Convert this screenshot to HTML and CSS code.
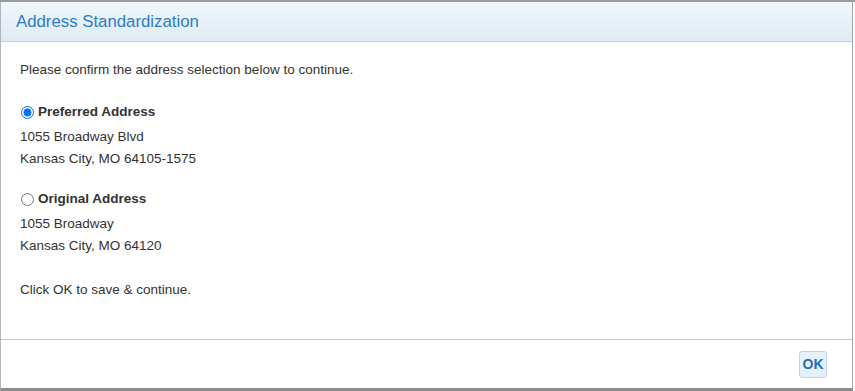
FILE: index.html
```html
<!DOCTYPE html>
<html lang="en">

<head>
    <meta charset="UTF-8">
    <meta name="viewport" content="width=device-width, initial-scale=1.0">
    <title>Address Standardization</title>
    <link rel="stylesheet" href="styles.css">
</head>

<body>

    <div class="topstrip"></div>
    <div class="modal">
        <div class="modal-header">
            <h1 class="modal-title">Address Standardization</h1>
        </div>
        <div class="modal-body">
            <p class="intro">Please confirm the address selection below to continue.</p>

            <div class="option">
                <label class="option-label">
                    <input type="radio" name="addr" value="preferred" checked>
                    <span>Preferred Address</span>
                </label>
                <div class="address">
                    <div>1055 Broadway Blvd</div>
                    <div>Kansas City, MO 64105-1575</div>
                </div>
            </div>

            <div class="option">
                <label class="option-label">
                    <input type="radio" name="addr" value="original">
                    <span>Original Address</span>
                </label>
                <div class="address">
                    <div>1055 Broadway</div>
                    <div>Kansas City, MO 64120</div>
                </div>
            </div>

            <p class="outro">Click OK to save &amp; continue.</p>
        </div>
        <div class="modal-footer">
            <button class="btn-ok">OK</button>
        </div>
    </div>

</body>

</html>
```

FILE: styles.css
```css
body {
    margin: 0;
    background: #fff;
    font-family: "Liberation Sans", Arial, sans-serif;
    font-size: 13.5px;
    color: #333;
}

.topstrip {
    height: 2px;
    background: #9c9c9c;
}

.modal {
    width: 851px;
    height: 386px;
    border-left: 1px solid #b4b4b4;
    border-right: 1px solid #a8a8a8;
    border-bottom: 3px solid #8c8c8c;
    display: flex;
    flex-direction: column;
    background: #fff;
}

.modal-header {
    height: 39px;
    border-bottom: 1px solid #b6d0e6;
    background: linear-gradient(#f1f7fc, #deebf6);
    display: flex;
    align-items: center;
    padding-left: 15px;
}

.modal-title {
    margin: 0;
    font-size: 16.8px;
    font-weight: normal;
    color: #2b7cc6;
}

.modal-body {
    flex: 1;
    padding: 17px 19px 0;
    line-height: 22px;
}

.intro {
    margin: 0 0 20px;
}

.option {
    margin-bottom: 18px;
}

.option-label {
    display: flex;
    align-items: center;
    font-weight: bold;
}

.option-label input {
    margin: 0 4px 0 1px;
    width: 13px;
    height: 13px;
}

.address {
    margin-top: 3px;
}

.outro {
    margin: 22px 0 0;
}

.modal-footer {
    height: 48px;
    border-top: 1px solid #c8c8c8;
    display: flex;
    align-items: center;
    justify-content: flex-end;
    padding-right: 25px;
}

.btn-ok {
    width: 28px;
    height: 27px;
    padding: 0;
    border: 1px solid #b8d5ef;
    border-radius: 3px;
    background: #e7f1fb;
    color: #1d6fbb;
    font-family: "Liberation Sans", Arial, sans-serif;
    font-size: 14px;
    font-weight: bold;
    cursor: pointer;
}
```
